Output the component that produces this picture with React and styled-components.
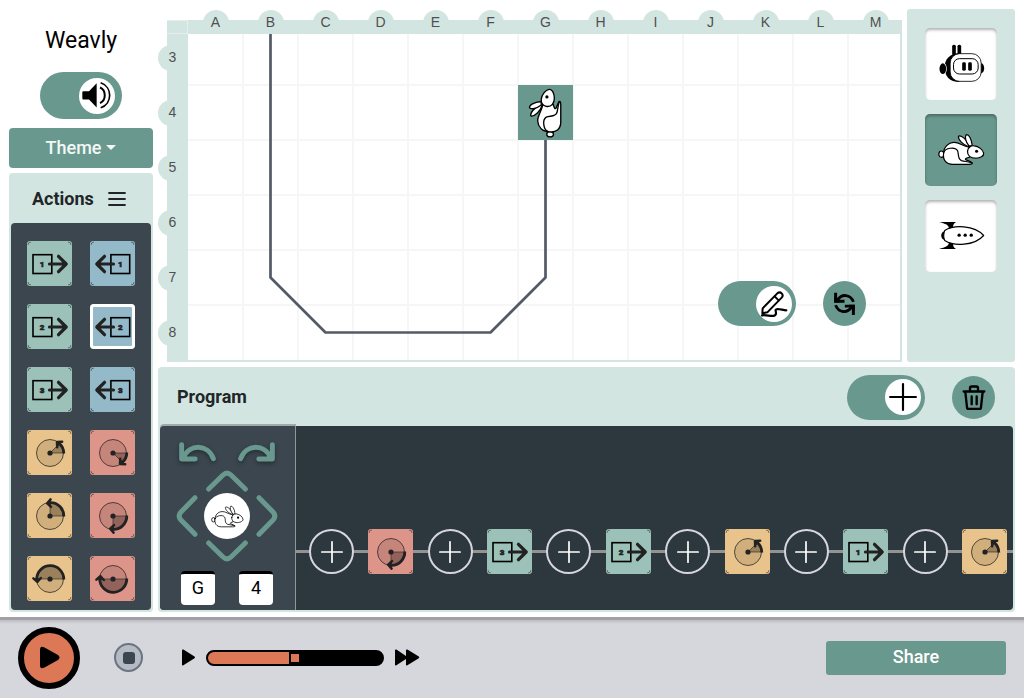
import React, { useState } from "react";
import styled, { createGlobalStyle, css } from "styled-components";

const c = {
  green: "#69988e",
  mint: "#d3e5e0",
  slate: "#3b464f",
  dark: "#2d383e",
  ink: "#212529",
  orange: "#dd7857",
  steel: "#d6d7dc",
};

const tint = {
  forward: "#9bc1b8",
  backward: "#94bac9",
  left: "#e8c38b",
  right: "#dd958a",
};

const GlobalStyle = createGlobalStyle`
  *, *::before, *::after { box-sizing: border-box; }
  body { margin: 0; background: #fff; font-family: Roboto, "Liberation Sans", sans-serif; color: ${c.ink}; }
  button, input { font: inherit; color: inherit; margin: 0; padding: 0; border: 0; }
  button { cursor: pointer; background: none; }
  svg { display: block; }
`;

/* ---------- layout ---------- */

const Main = styled.main`
  display: grid;
  grid-template-columns: 144px minmax(0, 1fr);
  gap: 5px;
  padding: 9px 9px 5px;
`;

const Sidebar = styled.div`
  display: flex;
  flex-direction: column;
`;

const Workspace = styled.div`
  display: grid;
  grid-template-columns: minmax(0, 1fr) 108px;
  gap: 5px;
`;

const Brand = styled.h1`
  margin: 0;
  height: 63px;
  line-height: 64px;
  font-size: 23px;
  font-weight: 400;
  color: #000;
  text-align: center;
`;

/* ---------- controls ---------- */

const ToggleTrack = styled.button`
  display: flex;
  align-items: center;
  justify-content: flex-end;
  width: ${(p) => (p.$large ? 82 : 78)}px;
  height: ${(p) => (p.$large ? 47 : 45)}px;
  padding-right: ${(p) => (p.$large ? 7 : 4)}px;
  border-radius: 24px;
  background: ${c.green};
`;

const Knob = styled.span`
  display: grid;
  place-items: center;
  width: 36px;
  height: 36px;
  border-radius: 50%;
  background: #fff;
`;

function Toggle({ label, large, children }) {
  const [on, setOn] = useState(true);
  return (
    <ToggleTrack type="button" role="switch" aria-checked={on} aria-label={label} $large={large} onClick={() => setOn(!on)}>
      <Knob>{children}</Knob>
    </ToggleTrack>
  );
}

const RoundButton = styled.button`
  display: grid;
  place-items: center;
  width: 43px;
  height: ${(p) => (p.$tall ? 45 : 43)}px;
  border-radius: 50%;
  background: ${c.green};
`;

const SoundRow = styled.div`
  display: flex;
  justify-content: center;
  margin-bottom: 9px;
`;

const ThemeButton = styled.button`
  display: flex;
  align-items: center;
  justify-content: center;
  gap: 5px;
  height: 40px;
  padding-bottom: 2px;
  margin-bottom: 5px;
  border-radius: 4px;
  background: ${c.green};
  color: #f1f8f6;
  font-size: 18px;
  font-weight: 500;

  &::after {
    content: "";
    border: 5px solid transparent;
    border-top-color: currentColor;
    border-bottom: 0;
  }
`;

const PanelTitle = styled.h2`
  margin: 0;
  font-size: 18px;
  line-height: 24px;
  font-weight: 700;
`;

/* ---------- actions ---------- */

const ActionsPanel = styled.section`
  padding: 0 2px 2px;
  border-radius: 4px;
  background: ${c.mint};
`;

const ActionsHeader = styled.header`
  display: flex;
  align-items: center;
  gap: 14px;
  height: 50px;
  padding: 2px 0 0 21px;
`;

const ActionGrid = styled.div`
  display: grid;
  grid-template-columns: 45px 45px;
  gap: 18px;
  padding: 18px 16px 9px;
  border-radius: 4px;
  background: ${c.slate};
`;

const Block = styled.button`
  flex: none;
  width: 45px;
  height: 45px;
  border-radius: 3px;
  background: ${(p) => tint[p.$kind]};
  ${(p) => p.$selected && css`border-radius: 4px; box-shadow: inset 0 0 0 3px #fff;`}
`;

/* ---------- world ---------- */

const World = styled.section`
  display: grid;
  grid-template-columns: 21px minmax(0, 1fr);
  padding: 11px 0 0 9px;
`;

const Corner = styled.div`
  border: 1px solid #e2efeb;
  border-left: 0;
  background: ${c.mint};
`;

const Columns = styled.div`
  display: flex;
  height: 14px;
  background: ${c.mint};
`;

const Rows = styled.div`
  display: flex;
  flex-direction: column;
  justify-content: flex-end;
  height: 328px;
  padding-bottom: 2px;
  background: ${c.mint};
`;

const AxisCell = styled.div`
  flex: none;
  display: flex;
  ${(p) =>
    p.$row
      ? css`height: 55px; align-items: center; margin-left: -9px;`
      : css`width: 55px; justify-content: center; margin-top: -10px;`}
`;

const Bubble = styled.span`
  flex: none;
  width: 26px;
  height: 26px;
  border-radius: 50%;
  background: ${c.mint};
  color: #4f5052;
  font: 14px/24px "Liberation Sans", sans-serif;
  text-align: center;
  ${(p) => p.$row && css`padding-left: 3px;`}
`;

const Field = styled.div`
  position: relative;
  border: solid ${c.mint};
  border-width: 0 2px 2px 0;
  background: #fff;
`;

const FieldTools = styled.div`
  position: absolute;
  right: 34px;
  bottom: 34px;
  display: flex;
  gap: 27px;
`;

const Characters = styled.aside`
  display: flex;
  flex-direction: column;
  align-items: center;
  gap: 14px;
  padding-top: 19px;
  border-radius: 3px;
  background: ${c.mint};
`;

const CharacterButton = styled.button`
  display: grid;
  place-items: center;
  width: 72px;
  height: 72px;
  padding-bottom: 2px;
  border-radius: 5px;
  background: ${(p) => (p.$active ? c.green : "#fff")};
  box-shadow: inset 0 2px 3px rgba(0, 0, 0, 0.3);
`;

/* ---------- program ---------- */

const ProgramPanel = styled.section`
  grid-column: 1 / -1;
  padding: 0 2px 2px;
  border-radius: 4px;
  background: ${c.mint};
`;

const ProgramHeader = styled.header`
  display: flex;
  align-items: center;
  gap: 27px;
  height: 59px;
  padding: 1px 18px 0 17px;

  ${PanelTitle} { margin-right: auto; }
`;

const ProgramBody = styled.div`
  display: flex;
  height: 184px;
  border-radius: 4px;
  background: ${c.dark};
`;

const Positioner = styled.div`
  flex: none;
  display: flex;
  flex-direction: column;
  align-items: center;
  width: 136px;
  padding: 16px 1px 0 0;
  border-right: 1px solid #8c9797;
  border-radius: 4px 0 0 4px;
  background: ${c.slate};
  box-shadow: 0 -2px 0 #9dabaa;
`;

const Pair = styled.div`
  display: flex;
  gap: ${(p) => p.$gap}px;
`;

const ArrowButton = styled.button`
  display: block;
  grid-area: ${(p) => p.$area};
  justify-self: center;
  align-self: center;
`;

const Pad = styled.div`
  display: grid;
  grid-template: "a b c" 22px "d e f" 48px "g h i" 22px / 22px 58px 22px;
  margin: 8px 0 9px;
`;

const PadCenter = styled.div`
  grid-area: e;
  place-self: center;
  display: grid;
  place-items: center;
  width: 46px;
  height: 46px;
  border-radius: 50%;
  background: #fff;
`;

const PositionInput = styled.input`
  width: 34px;
  height: 34px;
  padding-bottom: 4px;
  border-top: 3px solid #000;
  border-radius: 4px;
  background: #fff;
  color: #000;
  font-size: 18px;
  text-align: center;
`;

const Sequence = styled.div`
  flex: 1;
  min-width: 0;
  display: flex;
  justify-content: space-between;
  align-items: flex-start;
  padding: 103px 6px 0 13px;
  background: linear-gradient(#929494, #929494) 0 124px / 100% 3px no-repeat;
`;

const AddButton = styled.button`
  flex: none;
  display: grid;
  place-items: center;
  width: 45px;
  height: 45px;
  border: 2px solid #d6d5e0;
  border-radius: 50%;
  background: ${c.dark};
`;

/* ---------- player bar ---------- */

const Player = styled.footer`
  display: flex;
  align-items: center;
  height: 81px;
  padding: 0 18px 3px;
  border-top: 3px solid #a1a0a5;
  background: linear-gradient(#bcbcc1, ${c.steel} 4px);
`;

const PlayButton = styled.button`
  display: grid;
  place-items: center;
  width: 62px;
  height: 62px;
  border: 6px solid #000;
  border-radius: 50%;
  background: ${c.orange};
`;

const StopButton = styled.button`
  display: grid;
  place-items: center;
  width: 29px;
  height: 29px;
  margin: 0 39px 0 34px;
  border: 2px solid #6c7380;
  border-radius: 50%;
  background: #b5bbc4;

  &::before {
    content: "";
    width: 12px;
    height: 12px;
    border-radius: 3px;
    background: ${c.slate};
  }
`;

const Speed = styled.input`
  appearance: none;
  width: 178px;
  height: 16px;
  margin: 0 11px;
  border: 2px solid #000;
  border-radius: 8px;
  background: linear-gradient(90deg, ${c.orange} 47%, #000 47%);

  &::-webkit-slider-thumb {
    appearance: none;
    width: 12px;
    height: 12px;
    border: 2px solid #000;
    background: ${c.orange};
  }
`;

const ShareButton = styled.button`
  width: 180px;
  height: 34px;
  padding-bottom: 2px;
  margin-left: auto;
  border-radius: 3px;
  background: ${c.green};
  color: #fff;
  font-size: 18px;
  font-weight: 500;
`;

/* ---------- drawings ---------- */

const corners = "M1 4Q1 1 4 1M41 1Q44 1 44 4M44 41Q44 44 41 44M4 44Q1 44 1 41";

function MoveArt({ n, back, plain }) {
  return (
    <svg width="45" height="45" viewBox="0 0 45 45" fill="none" stroke="#222" aria-hidden="true">
      {!plain && <path d={corners} opacity="0.5" />}
      <rect x={back ? 20.9 : 6} y="13.7" width="18.8" height="18.8" stroke="#000" strokeWidth="1.6" />
      <path
        d={back ? "M23.5 23H7M14.5 15.3L6.8 23L14.5 30.7" : "M22.5 23H39M31.5 15.3L39.2 23L31.5 30.7"}
        strokeWidth="3.2"
        strokeLinecap="round"
        strokeLinejoin="round"
      />
      <text x={back ? 30.3 : 15} y="26" fontSize="8" fontWeight="900" fill="#222" stroke="#222" strokeWidth="0.6" textAnchor="middle" fontFamily="Roboto, sans-serif">
        {n}
      </text>
    </svg>
  );
}

function TurnArt({ deg, clockwise }) {
  const a = (deg * Math.PI) / 180;
  const x = 23 + 13.3 * Math.cos(a);
  const y = 23 - 13.3 * Math.sin(a);
  return (
    <svg width="45" height="45" viewBox="0 0 45 45" fill="none" stroke="#222" aria-hidden="true">
      <path d={corners} opacity="0.5" />
      <g transform={clockwise ? "matrix(1 0 0 -1 0 46)" : undefined}>
        <circle cx="23" cy="23" r="13.5" fill="rgba(0,0,0,.1)" strokeOpacity="0.75" />
        <path d={`M23 23H36.3A13.3 13.3 0 0 0 ${x} ${y}Z`} fill="rgba(0,0,0,.26)" strokeOpacity="0.6" />
        <path d={`M36.8 23.5A13.3 13.3 0 0 0 ${x} ${y}`} strokeWidth="2.8" />
        <path
          d="M23.6 6.4L20.2 10.3L24 13.8"
          fill="#222"
          strokeWidth="2.5"
          strokeLinejoin="round"
          strokeLinecap="round"
          transform={`rotate(${90 - deg} 23 23)`}
        />
        <circle cx="23" cy="23" r="2.6" fill="#222" stroke="none" />
      </g>
    </svg>
  );
}

function ActionBlock({ kind, n, selected }) {
  const turning = kind === "left" || kind === "right";
  return (
    <Block type="button" $kind={kind} $selected={selected} aria-label={`${kind} ${n}`}>
      {turning ? <TurnArt deg={n} clockwise={kind === "right"} /> : <MoveArt n={n} back={kind === "backward"} plain={selected} />}
    </Block>
  );
}

function RabbitShape({ weight = 3.2 }) {
  return (
    <g fill="#fff" stroke="#000" strokeWidth={weight} strokeLinejoin="round" strokeLinecap="round">
      <ellipse cx="10" cy="63" rx="7.5" ry="9.5" />
      <path d="M17 58C17 42 30 29 47 28C62 27 72 38 92 42L94 72C85 74 78 77 84 80L98 86C106 90 102 93 92 93H44C24 93 13 80 17 58Z" />
      <path d="M17 58C22 44 50 40 58 52C63 62 57 77 70 82C80 85 92 85 101 89" fill="none" />
      <path d="M90 40C75 36 60 20 61 10C64 5 76 12 84 22C89 29 93 35 94 40Z" />
      <path d="M92 38C82 25 79 10 84 5C92 4 100 17 102 38Z" />
      <path d="M88 54C89 43 98 37 108 38C121 39 134 50 136 60C137 69 126 74 112 75C97 75 87 67 88 54Z" />
      <circle cx="115" cy="54" r="4.6" fill="#000" stroke="none" />
    </g>
  );
}

function Rabbit({ width, height, weight }) {
  return (
    <svg width={width} height={height} viewBox="0 0 140 98" aria-hidden="true">
      <RabbitShape weight={weight} />
    </svg>
  );
}

function Robot() {
  return (
    <svg width="47" height="40" viewBox="0 0 140 120" aria-hidden="true">
      <rect x="42" y="5" width="11" height="32" rx="5" />
      <rect x="58" y="5" width="11" height="32" rx="5" />
      <ellipse cx="129" cy="76" rx="9" ry="15" />
      <path d="M64 31C34 31 19 50 19 74C19 98 34 117 64 117Z" />
      <ellipse cx="13" cy="77" rx="13" ry="19" fill="#fff" />
      <ellipse cx="14" cy="77" rx="10" ry="16" />
      <rect x="36" y="32" width="93" height="83" rx="28" fill="#fff" stroke="#000" strokeWidth="2.5" />
      <rect x="46" y="47" width="74" height="46" rx="18" fill="#fff" stroke="#000" strokeWidth="3" />
      <rect x="72" y="58" width="11" height="25" rx="4" />
      <rect x="90" y="58" width="11" height="25" rx="4" />
    </svg>
  );
}

function Rocket() {
  return (
    <svg width="47" height="31" viewBox="0 0 140 92" aria-hidden="true">
      <path d="M3 6H54C48 9 44 14 45 26H32C34 15 22 11 3 6Z" />
      <path d="M3 86H54C48 83 44 78 45 66H32C34 77 22 81 3 86Z" />
      <path d="M20 33C6 35 6 57 20 59Z" />
      <path d="M20 31C46 14 108 14 136 46C108 78 46 78 20 61C16 51 16 41 20 31Z" fill="#fff" stroke="#000" strokeWidth="3.4" strokeLinejoin="round" />
      <circle cx="63" cy="45" r="5" />
      <circle cx="81" cy="45" r="5" />
      <circle cx="99" cy="45" r="5" />
    </svg>
  );
}

function Speaker() {
  return (
    <svg width="30" height="27" viewBox="0 0 90 80" aria-hidden="true">
      <path d="M1 30Q1 27 4 27H21L44 3V76L21 52H4Q1 52 1 49Z" />
      <path d="M54 16C73 24 73 55 54 63" fill="none" stroke="#000" strokeWidth="6" />
      <path d="M56 2C92 14 92 65 56 77" fill="none" stroke="#000" strokeWidth="5" />
    </svg>
  );
}

function Pencil() {
  return (
    <svg width="28" height="28" viewBox="0 0 84 84" fill="none" stroke="#000" strokeWidth="6" strokeLinejoin="round" strokeLinecap="round" aria-hidden="true">
      <path d="M7 70L8 55L52 10Q59 4 65 10Q71 16 65 23L22 67Z" />
      <path d="M44 19L56 31" />
      <path d="M6 76C22 73 47 85 48 70C48 62 43 58 53 57C62 57 70 61 79 61" strokeWidth="6.5" />
    </svg>
  );
}

function Refresh() {
  return (
    <svg width="23" height="25" viewBox="0 0 70 76" fill="none" stroke="#000" strokeWidth="9" aria-hidden="true">
      <path d="M8 5V31H35M62 73V46H36" />
      <path d="M4 35V18L22 35ZM66 42V60L48 42Z" fill="#000" stroke="none" />
      <path d="M13 29C26 6 54 10 62 33M57 48C44 70 16 66 8 43" strokeWidth="8.5" />
    </svg>
  );
}

function Trash() {
  return (
    <svg width="24" height="27" viewBox="0 0 72 80" fill="none" stroke="#000" strokeWidth="7" strokeLinecap="round" strokeLinejoin="round" aria-hidden="true">
      <path d="M5 22H67M24 20V12Q24 7 29 7H43Q48 7 48 12V20" />
      <path d="M10 24L15 69Q15 74 20 74H52Q57 74 57 69L62 24M29 37V60M44 37V60" />
    </svg>
  );
}

function Plus({ size, color, weight }) {
  return (
    <svg width={size} height={size} viewBox="0 0 26 26" stroke={color} strokeWidth={weight} strokeLinecap="round" aria-hidden="true">
      <path d="M13 1V25M1 13H25" />
    </svg>
  );
}

const Shadowed = styled.svg`
  filter: drop-shadow(0 2px 2px rgba(0, 0, 0, 0.35));
  overflow: visible;
`;

function TurnArrow({ flip }) {
  return (
    <Shadowed width="37" height="20" viewBox="0 0 112 60" fill="none" stroke={c.green} strokeWidth="15" strokeLinecap="round" strokeLinejoin="round" aria-hidden="true">
      <g transform={flip ? "matrix(-1 0 0 1 112 0)" : undefined}>
        <path d="M8 8V51H49M14 47C30 5 88 5 104 50" />
      </g>
    </Shadowed>
  );
}

function Chevron({ turn = 0 }) {
  const upright = turn % 180 === 0;
  return (
    <svg width={upright ? 42 : 22} height={upright ? 22 : 42} viewBox={upright ? "-63 -33 126 66" : "-33 -63 66 126"} fill="none" stroke={c.green} strokeWidth="15" strokeLinecap="round" aria-hidden="true">
      <path d="M-55 24L-12 -18Q0 -29 12 -18L55 24" transform={`rotate(${turn})`} />
    </svg>
  );
}

function SmallPlay() {
  return (
    <svg width="13" height="17" viewBox="0 0 13 17" aria-hidden="true">
      <path d="M0 1.5Q0 0 1.4 .6L12.5 7.5Q13.4 8.5 12.5 9.3L1.4 16.3Q0 17 0 15.5Z" />
    </svg>
  );
}

function FastForward() {
  return (
    <svg width="25" height="17" viewBox="0 0 25 17" aria-hidden="true">
      <path d="M0 1.5Q0 0 1.4 .6L11 7V1.5Q11 0 12.4 .6L23.8 7.5Q24.8 8.5 23.8 9.3L12.4 16.3Q11 17 11 15.5V10L1.4 16.3Q0 17 0 15.5Z" />
    </svg>
  );
}

const gridLines =
  Array.from({ length: 12 }, (_, i) => `M${(i + 1) * 55} 0V326`).join("") +
  Array.from({ length: 5 }, (_, i) => `M0 ${i * 55 + 51}H2000`).join("");

function FieldArt() {
  return (
    <svg width="100%" height="326" role="img" aria-label="Rabbit on G 4 with its drawn path">
      <path d={gridLines} stroke="#f6f6f6" strokeWidth="2" />
      <path d="M82.5 0V243.500L137.500 298.500H302.500L357.500 243.500V79" fill="none" stroke="#535a66" strokeWidth="2.7" strokeLinejoin="round" />
      <rect x="330" y="51" width="55" height="55" fill={c.green} />
      <g transform="translate(357.500 78.500) rotate(-90) scale(.355) translate(-71 -50)">
        <RabbitShape weight={3.8} />
      </g>
    </svg>
  );
}

/* ---------- data ---------- */

const actions = [
  ["forward", 1], ["backward", 1],
  ["forward", 2], ["backward", 2],
  ["forward", 3], ["backward", 3],
  ["left", 45], ["right", 45],
  ["left", 90], ["right", 90],
  ["left", 180], ["right", 180],
];

const program = [["right", 90], ["forward", 3], ["forward", 2], ["left", 45], ["forward", 1], ["left", 45]];

export default function App() {
  return (
    <>
      <GlobalStyle />
      <Main>
        <Sidebar>
          <Brand>Weavly</Brand>
          <SoundRow>
            <Toggle label="Sound" large><Speaker /></Toggle>
          </SoundRow>
          <ThemeButton type="button">Theme</ThemeButton>
          <ActionsPanel>
            <ActionsHeader>
              <PanelTitle>Actions</PanelTitle>
              <button type="button" aria-label="Choose actions">
                <svg width="18" height="14" viewBox="0 0 18 14" stroke={c.ink} strokeWidth="1.8" strokeLinecap="round" aria-hidden="true">
                  <path d="M1 1H17M1 7H17M1 13H17" />
                </svg>
              </button>
            </ActionsHeader>
            <ActionGrid>
              {actions.map(([kind, n]) => (
                <ActionBlock key={kind + n} kind={kind} n={n} selected={kind === "backward" && n === 2} />
              ))}
            </ActionGrid>
          </ActionsPanel>
        </Sidebar>

        <Workspace>
          <World>
            <Corner />
            <Columns>
              {[..."ABCDEFGHIJKLM"].map((l) => (
                <AxisCell key={l}><Bubble>{l}</Bubble></AxisCell>
              ))}
            </Columns>
            <Rows>
              {[3, 4, 5, 6, 7, 8].map((n) => (
                <AxisCell key={n} $row><Bubble $row>{n}</Bubble></AxisCell>
              ))}
            </Rows>
            <Field>
              <FieldArt />
              <FieldTools>
                <Toggle label="Pen down"><Pencil /></Toggle>
                <RoundButton type="button" aria-label="Refresh" $tall><Refresh /></RoundButton>
              </FieldTools>
            </Field>
          </World>

          <Characters>
            <CharacterButton type="button" aria-label="Robot"><Robot /></CharacterButton>
            <CharacterButton type="button" aria-label="Rabbit" $active><Rabbit width={47} height={33} weight={3.6} /></CharacterButton>
            <CharacterButton type="button" aria-label="Rocket"><Rocket /></CharacterButton>
          </Characters>

          <ProgramPanel>
            <ProgramHeader>
              <PanelTitle>Program</PanelTitle>
              <Toggle label="Add nodes"><Plus size={28} color="#000" weight={2} /></Toggle>
              <RoundButton type="button" aria-label="Delete all"><Trash /></RoundButton>
            </ProgramHeader>
            <ProgramBody>
              <Positioner>
                <Pair $gap={22}>
                  <ArrowButton type="button" aria-label="Turn left"><TurnArrow /></ArrowButton>
                  <ArrowButton type="button" aria-label="Turn right"><TurnArrow flip /></ArrowButton>
                </Pair>
                <Pad>
                  <ArrowButton type="button" aria-label="Move up" $area="b"><Chevron /></ArrowButton>
                  <ArrowButton type="button" aria-label="Move left" $area="d"><Chevron turn={-90} /></ArrowButton>
                  <PadCenter><Rabbit width={33} height={23} weight={3.4} /></PadCenter>
                  <ArrowButton type="button" aria-label="Move right" $area="f"><Chevron turn={90} /></ArrowButton>
                  <ArrowButton type="button" aria-label="Move down" $area="h"><Chevron turn={180} /></ArrowButton>
                </Pad>
                <Pair $gap={24}>
                  <PositionInput aria-label="Column" defaultValue="G" />
                  <PositionInput aria-label="Row" defaultValue="4" />
                </Pair>
              </Positioner>
              <Sequence>
                {program.map(([kind, n], i) => (
                  <React.Fragment key={i}>
                    <AddButton type="button" aria-label="Add action"><Plus size={22} color="#fff" weight={2} /></AddButton>
                    <ActionBlock kind={kind} n={n} />
                  </React.Fragment>
                ))}
              </Sequence>
            </ProgramBody>
          </ProgramPanel>
        </Workspace>
      </Main>

      <Player>
        <PlayButton type="button" aria-label="Play">
          <svg width="21" height="23" viewBox="0 0 21 23" aria-hidden="true">
            <path d="M1 4Q1 -1 5.500 1.500L19 9Q22 11.500 19 14L5.500 21.500Q1 24 1 19Z" />
          </svg>
        </PlayButton>
        <StopButton type="button" aria-label="Stop" />
        <SmallPlay />
        <Speed type="range" min="1" max="5" defaultValue="3" aria-label="Speed" />
        <FastForward />
        <ShareButton type="button">Share</ShareButton>
      </Player>
    </>
  );
}
